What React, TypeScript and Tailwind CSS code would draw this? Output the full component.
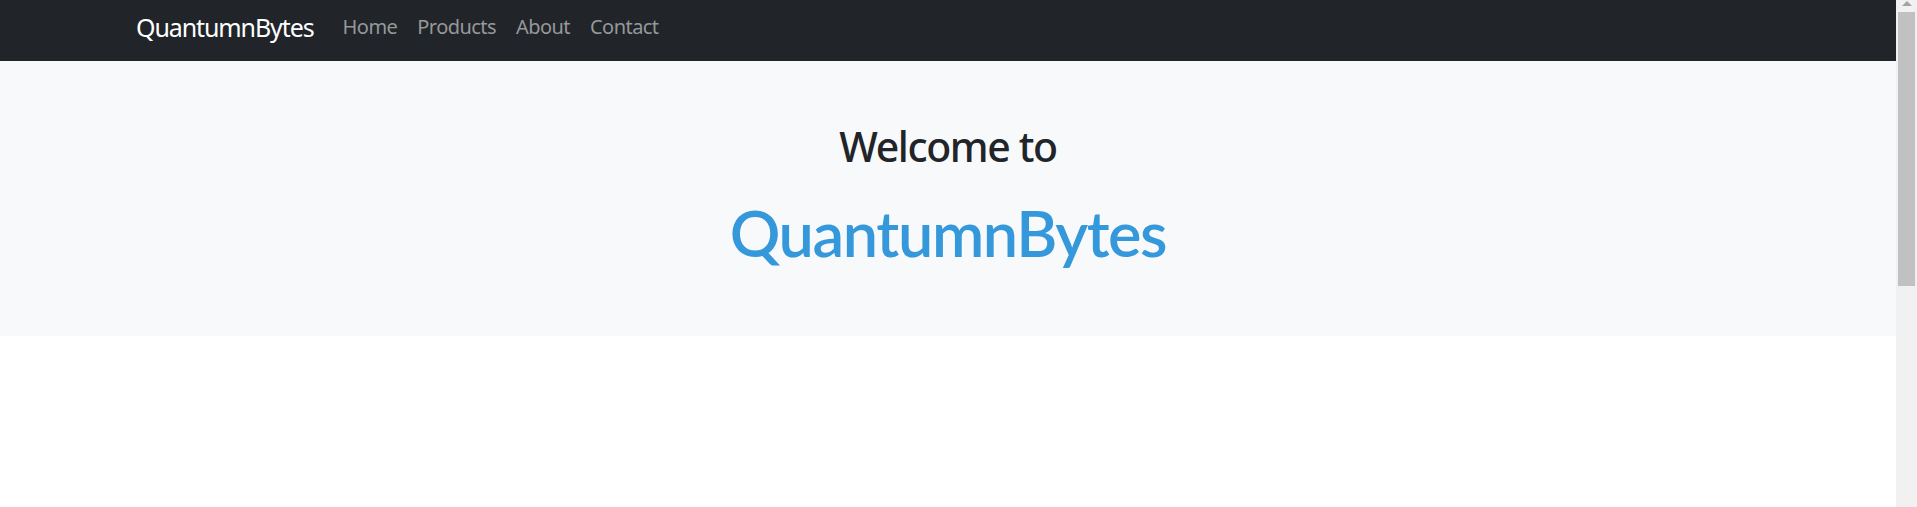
import React from "react";

const font = { fontFamily: '"Noto Sans", "Open Sans", Arial, sans-serif' };
const lato = { fontFamily: 'Lato, "Noto Sans", Arial, sans-serif' };

export default function App() {
  return (
    <div className="flex h-[507px] w-full overflow-hidden bg-white" style={font}>
      <div className="flex-1 flex flex-col">
        <nav className="h-[61px] bg-[#212529] flex items-start pl-[136px]">
          <span className="mt-[14.5px] text-white text-[25px] leading-none tracking-[-1.1px]">QuantumnBytes</span>
          <div className="ml-[19px] mt-[17px] flex items-start">
            {["Home", "Products", "About", "Contact"].map((l) => (
              <a key={l} className="px-[10px] text-[20px] leading-none text-[#96989a] tracking-[-0.55px]">
                {l}
              </a>
            ))}
          </div>
        </nav>
        <section className="h-[275px] bg-[#f8f9fa] flex flex-col items-center pt-[61px]">
          <h1 className="text-[41px] leading-[48px] font-medium text-[#212529] tracking-[-1.4px]">Welcome to</h1>
          <h2 className="mt-[25px] text-[63px] leading-[76px] font-semibold text-[#3498db] tracking-[-1.4px]" style={lato}>QuantumnBytes</h2>
        </section>
        <div className="flex-1 bg-white" />
      </div>
      <div className="w-[21px] bg-[#f1f1f1] flex flex-col items-center">
        <div className="mt-[1px] w-0 h-0 border-l-[5px] border-r-[5px] border-b-[5px] border-l-transparent border-r-transparent border-b-[#a3a3a3]" />
        <div className="mt-[6px] w-[17px] h-[274px] bg-[#c1c1c1]" />
      </div>
    </div>
  );
}
